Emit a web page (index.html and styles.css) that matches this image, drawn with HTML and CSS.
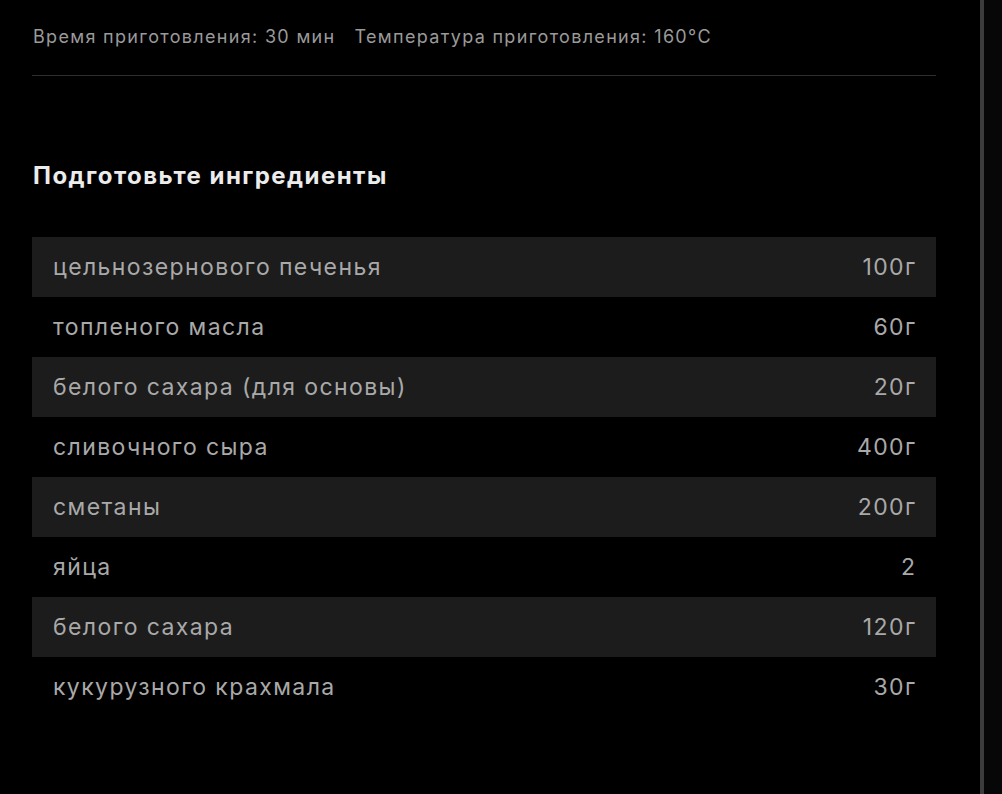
FILE: index.html
```html
<!DOCTYPE html>
<html lang="ru">
<head>
<meta charset="utf-8">
<link rel="stylesheet" href="styles.css">
</head>
<body>
<div class="layout">
  <main class="content">
    <div class="meta">
      <span>Время приготовления: 30 мин</span>
      <span>Температура приготовления: 160°C</span>
    </div>
    <h2 class="heading">Подготовьте ингредиенты</h2>
    <ul class="ingredients">
      <li class="row"><span>цельнозернового печенья</span><span>100г</span></li>
      <li class="row"><span>топленого масла</span><span>60г</span></li>
      <li class="row"><span>белого сахара (для основы)</span><span>20г</span></li>
      <li class="row"><span>сливочного сыра</span><span>400г</span></li>
      <li class="row"><span>сметаны</span><span>200г</span></li>
      <li class="row"><span>яйца</span><span>2</span></li>
      <li class="row"><span>белого сахара</span><span>120г</span></li>
      <li class="row"><span>кукурузного крахмала</span><span>30г</span></li>
    </ul>
  </main>
  <div class="divider"></div>
  <aside class="side"></aside>
</div>
</body>
</html>
```
FILE: styles.css
```css
html, body {
  margin: 0;
  padding: 0;
  background: #000;
  height: 100%;
}
body {
  font-family: Inter, "Noto Sans", sans-serif;
  -webkit-font-smoothing: antialiased;
}
.layout {
  display: flex;
  height: 794px;
  overflow: hidden;
}
.content {
  width: 904px;
  padding: 0 44px 0 32px;
  flex: none;
}
.divider {
  width: 4px;
  background: #3c3c3e;
  flex: none;
}
.side {
  flex: 1;
  background: #070707;
}
.meta {
  display: flex;
  gap: 19px;
  padding: 25px 0 25px 1px;
  height: 25px;
  font-size: 18px;
  line-height: 24px;
  color: #9a9a9a;
  letter-spacing: 1.32px;
  border-bottom: 1px solid #2e2e2e;
}
.heading {
  margin: 86px 0 0 1px;
  font-size: 24px;
  line-height: 28px;
  font-weight: 700;
  color: #ececec;
  letter-spacing: 1.45px;
}
.ingredients {
  list-style: none;
  margin: 47px 0 0;
  padding: 0;
}
.row {
  display: flex;
  justify-content: space-between;
  align-items: center;
  height: 60px;
  padding: 0 21px 0 21px;
  font-size: 23px;
  color: #a9a9a9;
  letter-spacing: 1.4px;
}
.row span:last-child {
  margin-right: -1.4px;
}
.row:nth-child(odd) {
  background: #1c1c1c;
}
```
